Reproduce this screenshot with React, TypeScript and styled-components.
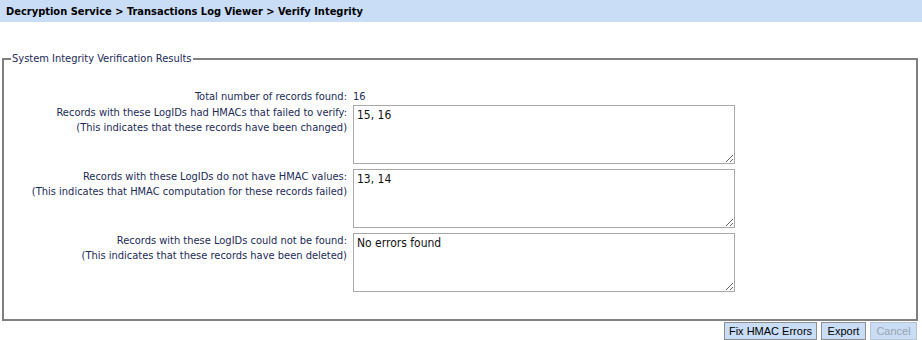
import { Fragment } from "react";
import styled, { createGlobalStyle } from "styled-components";

const GlobalStyle = createGlobalStyle`
    body {
        margin: 0;
        background: #ffffff;
        font-family: "DejaVu Sans", Tahoma, sans-serif;
        font-stretch: condensed;
    }
`;

const Page = styled.div`
    width: 922px;
    height: 340px;
    display: flex;
    flex-direction: column;
    overflow: hidden;
`;

const Header = styled.div`
    height: 25px;
    background-color: #c9ddf7;
    display: flex;
    align-items: center;
    padding-left: 6px;
    font-size: 11px;
    font-weight: bold;
    font-stretch: condensed;
    color: #000;
`;

const Fieldset = styled.fieldset`
    margin: 30px 4px 0 2px;
    padding: 24px 0 27px 0;
    border: 2px solid #808080;
`;

const Legend = styled.legend`
    margin-left: 7px;
    padding: 0 1px;
    font-size: 11px;
    font-stretch: condensed;
    color: #1b2a57;
`;

const Grid = styled.div`
    display: grid;
    grid-template-columns: 343px 382px;
    column-gap: 6px;
    row-gap: 5px;
    align-items: start;
`;

const Label = styled.div<{ $tight?: boolean }>`
    text-align: right;
    font-size: 11px;
    line-height: 15px;
    font-stretch: condensed;
    color: #1b2a57;
    margin-bottom: ${(p) => (p.$tight ? "-4px" : "0")};
`;

const Value = styled.div`
    font-size: 11px;
    line-height: 15px;
    font-stretch: condensed;
    color: #1b2a57;
    margin-bottom: -4px;
`;

const Box = styled.textarea`
    box-sizing: border-box;
    width: 382px;
    height: 59px;
    margin: 0;
    border: 1px solid #a9a9a9;
    padding: 2px 3px;
    font-family: "DejaVu Sans", Tahoma, sans-serif;
    font-stretch: condensed;
    font-size: 12px;
    color: #111;
    resize: both;
    display: block;
`;

const Actions = styled.div`
    display: flex;
    justify-content: flex-end;
    gap: 4px;
    padding-right: 5px;
    margin-top: 1px;
`;

const Action = styled.button<{ $w: number; $disabled?: boolean }>`
    width: ${(p) => p.$w}px;
    height: 18px;
    padding: 0;
    background-color: #c9ddf7;
    border: 1px solid ${(p) => (p.$disabled ? "#b7c4d4" : "#8e8e8e")};
    font-family: "Liberation Sans", Arial, sans-serif;
    font-size: 11px;
    color: ${(p) => (p.$disabled ? "#9aa3ad" : "#000")};
    cursor: default;
`;

const rows = [
    {
        title: "Records with these LogIDs had HMACs that failed to verify:",
        note: "(This indicates that these records have been changed)",
        value: "15, 16",
    },
    {
        title: "Records with these LogIDs do not have HMAC values:",
        note: "(This indicates that HMAC computation for these records failed)",
        value: "13, 14",
    },
    {
        title: "Records with these LogIDs could not be found:",
        note: "(This indicates that these records have been deleted)",
        value: "No errors found",
    },
];

export default function App() {
    return (
        <Page>
            <GlobalStyle />
            <Header>Decryption Service &gt; Transactions Log Viewer &gt; Verify Integrity</Header>
            <Fieldset>
                <Legend>System Integrity Verification Results</Legend>
                <Grid>
                    <Label $tight>Total number of records found:</Label>
                    <Value>16</Value>
                    {rows.map((r) => (
                        <Fragment key={r.title}>
                            <Label>
                                {r.title}
                                <br />
                                {r.note}
                            </Label>
                            <Box defaultValue={r.value} />
                        </Fragment>
                    ))}
                </Grid>
            </Fieldset>
            <Actions>
                <Action $w={93}>Fix HMAC Errors</Action>
                <Action $w={45}>Export</Action>
                <Action $w={47} $disabled disabled>Cancel</Action>
            </Actions>
        </Page>
    );
}
